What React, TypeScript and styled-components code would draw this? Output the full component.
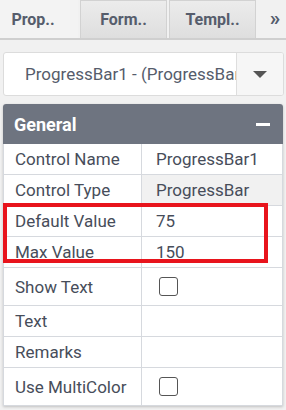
import styled, { createGlobalStyle } from "styled-components";

const GlobalStyle = createGlobalStyle`
  body {
    margin: 0;
    background-color: #f1f1f1;
    font-family: Roboto, "Liberation Sans", sans-serif;
  }
`;

const Page = styled.div`
  width: 286px;
  height: 410px;
  overflow: hidden;
  position: relative;
`;

const TabBar = styled.div`
  display: flex;
  height: 38px;
  border-bottom: 2px solid #cfcfcf;
`;

const Tab = styled.div<{ $active?: boolean; $width: number }>`
  width: ${(p) => p.$width}px;
  margin-right: 2px;
  padding-right: ${(p) => (p.$active ? 12 : 0)}px;
  display: flex;
  align-items: center;
  justify-content: center;
  font-size: 16px;
  font-weight: 700;
  color: #565d6c;
  box-sizing: border-box;
  border: 1px solid ${(p) => (p.$active ? "#f3f3f3" : "#d2d2d2")};
  border-bottom: none;
  background: ${(p) =>
    p.$active ? "#f3f3f3" : "linear-gradient(#ececec, #dedede)"};
`;

const More = styled.div`
  flex: 1;
  display: flex;
  align-items: center;
  justify-content: center;
  font-size: 21px;
  font-weight: 700;
  color: #565d6c;
  padding-left: 6px;
  padding-bottom: 3px;
`;

const Select = styled.div`
  display: flex;
  margin: 12px 2px 0 3px;
  height: 44px;
  background: #fff;
  border: 1px solid #dcdcdc;
  border-radius: 3px;
  box-sizing: border-box;
  overflow: hidden;
`;

const SelectText = styled.div`
  flex: 1;
  padding-left: 21px;
  display: flex;
  align-items: center;
  font-size: 17px;
  color: #555c6b;
  white-space: nowrap;
  overflow: hidden;
`;

const SelectButton = styled.div`
  width: 46px;
  display: flex;
  align-items: center;
  justify-content: center;
  background: #f6f6f6;
  border-left: 1px solid #dedede;
`;

const Arrow = styled.div`
  width: 0;
  height: 0;
  border-left: 7px solid transparent;
  border-right: 7px solid transparent;
  border-top: 7px solid #555;
`;

const Panel = styled.div`
  margin: 8px 3px 0 3px;
  width: 280px;
  background: #fff;
  border-radius: 3px 3px 0 0;
  box-shadow: 0 1px 3px rgba(0, 0, 0, 0.2);
`;

const PanelHeader = styled.div`
  height: 40px;
  display: flex;
  align-items: center;
  justify-content: space-between;
  padding: 0 13px 0 11px;
  background: #6e7480;
  border-radius: 3px 3px 0 0;
  color: #fff;
  font-size: 18px;
  font-weight: 700;
`;

const Minus = styled.div`
  width: 14px;
  height: 3px;
  background: #fff;
`;

const Row = styled.div<{ $tall?: boolean }>`
  display: grid;
  grid-template-columns: 139px 1fr;
  height: ${(p) => (p.$tall ? 38 : 31)}px;
  border-bottom: 1px solid #d6d9de;
  box-sizing: border-box;
  font-size: 17px;
  color: #474d5a;
`;

const Label = styled.div`
  display: flex;
  align-items: center;
  padding-left: 11px;
  white-space: nowrap;
  border-left: 1px solid #d6d9de;
  border-right: 1px solid #d6d9de;
`;

const Value = styled.div<{ $readonly?: boolean }>`
  display: flex;
  align-items: center;
  padding-left: 14px;
  border-right: 1px solid #d6d9de;
  background: ${(p) => (p.$readonly ? "#f1f1f1" : "#fff")};
`;

const Checkbox = styled.div`
  width: 17px;
  height: 17px;
  margin-left: 3px;
  border: 1.5px solid #555;
  border-radius: 3px;
`;

const Highlight = styled.div`
  position: absolute;
  left: 3px;
  top: 203px;
  width: 265px;
  height: 60px;
  border: 4px solid #e8141c;
  box-sizing: border-box;
`;

const rows: { label: string; value?: string; readonly?: boolean; check?: boolean }[] = [
  { label: "Control Name", value: "ProgressBar1" },
  { label: "Control Type", value: "ProgressBar", readonly: true },
  { label: "Default Value", value: "75" },
  { label: "Max Value", value: "150" },
  { label: "Show Text", check: true },
  { label: "Text" },
  { label: "Remarks" },
  { label: "Use MultiColor", check: true },
];

const App = () => {
  return (
    <Page>
      <GlobalStyle />
      <TabBar>
        <Tab $active $width={78}>Prop..</Tab>
        <Tab $width={87}>Form..</Tab>
        <Tab $width={87}>Templ..</Tab>
        <More>»</More>
      </TabBar>
      <Select>
        <SelectText>ProgressBar1 - (ProgressBar)</SelectText>
        <SelectButton>
          <Arrow />
        </SelectButton>
      </Select>
      <Panel>
        <PanelHeader>
          General
          <Minus />
        </PanelHeader>
        {rows.map((r) => (
          <Row key={r.label} $tall={r.check}>
            <Label>{r.label}</Label>
            <Value $readonly={r.readonly}>
              {r.check ? <Checkbox /> : r.value}
            </Value>
          </Row>
        ))}
      </Panel>
      <Highlight />
    </Page>
  );
};

export default App;
